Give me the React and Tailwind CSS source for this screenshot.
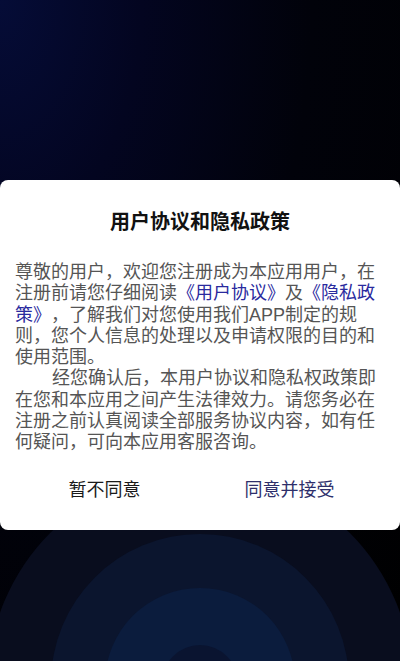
const link = 'text-[#2a2a9e]';

export default function App() {
  return (
    <div
      className="relative w-full h-[661px] overflow-hidden bg-[radial-gradient(ellipse_at_top_left,#050c37_0%,#030520_25%,#01020a_55%,#000000_100%)]"
      style={{ fontFamily: '"Noto Sans CJK SC", "Noto Sans", sans-serif' }}
    >
      {/* background rings */}
      <svg
        className="absolute left-0 bottom-0"
        width="400"
        height="240"
        viewBox="0 0 400 240"
      >
        <circle cx="200" cy="262" r="212" fill="#090d1e" />
        <circle cx="200" cy="262" r="149" fill="#0b152e" />
        <circle cx="200" cy="262" r="95" fill="#0b1c3d" />
        <circle cx="200" cy="262" r="38" fill="#0a1430" />
      </svg>

      {/* dialog */}
      <div className="absolute inset-x-0 top-[180px]">
        <div className="bg-white rounded-[8px] h-[350px] flex flex-col">
          <h2 className="pt-[27px] text-center text-[20px] leading-[28px] font-bold text-[#111]">
            用户协议和隐私政策
          </h2>

          <div
            className="mt-[27px] px-[15px] text-[18px] leading-[21.3px] text-[#555] whitespace-nowrap [text-spacing-trim:space-all]"
            style={{ fontFamily: '"Liberation Sans", "Noto Sans CJK SC", sans-serif' }}
          >
            <div>尊敬的用户，欢迎您注册成为本应用用户，在</div>
            <div>
              注册前请您仔细阅读<span className={link}>《用户协议》</span>及<span className={link}>《隐私政</span>
            </div>
            <div>
              <span className={link}>策》</span>，了解我们对您使用我们APP制定的规
            </div>
            <div>则，您个人信息的处理以及申请权限的目的和</div>
            <div>使用范围。</div>
            <div className="pl-[37px]">经您确认后，本用户协议和隐私权政策即</div>
            <div>在您和本应用之间产生法律效力。请您务必在</div>
            <div>注册之前认真阅读全部服务协议内容，如有任</div>
            <div>何疑问，可向本应用客服咨询。</div>
          </div>

          <div className="mt-[10px] flex pl-[12px] pr-[18px] h-[50px] items-center text-[18px]">
            <button className="flex-1 text-center text-[#1a1a1a]">暂不同意</button>
            <button className="flex-1 text-center text-[#2e2f6b]">同意并接受</button>
          </div>
        </div>
      </div>
    </div>
  );
}
